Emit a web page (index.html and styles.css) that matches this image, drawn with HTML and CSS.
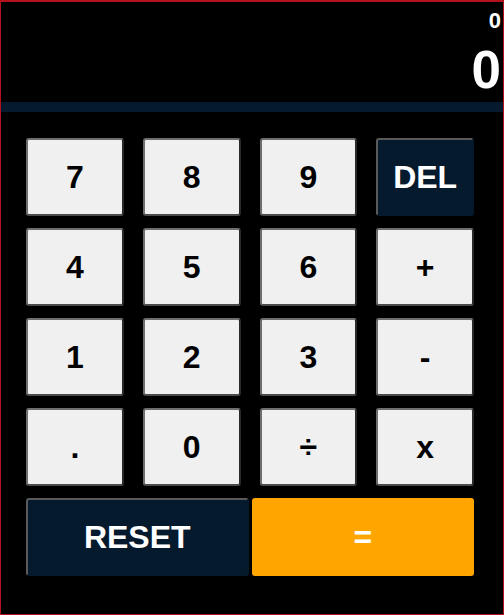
FILE: index.html
```html
<!DOCTYPE html>
<html>
<head>
<meta charset="utf-8">
<link rel="stylesheet" href="styles.css">
</head>
<body>
<div class="calc">
  <div class="display">
    <div class="prev">0</div>
    <div class="current">0</div>
  </div>
  <div class="bar"></div>
  <div class="keys">
    <button class="key">7</button>
    <button class="key">8</button>
    <button class="key">9</button>
    <button class="key dark">DEL</button>
    <button class="key">4</button>
    <button class="key">5</button>
    <button class="key">6</button>
    <button class="key">+</button>
    <button class="key">1</button>
    <button class="key">2</button>
    <button class="key">3</button>
    <button class="key">-</button>
    <button class="key">.</button>
    <button class="key">0</button>
    <button class="key">÷</button>
    <button class="key">x</button>
  </div>
  <div class="bottom">
    <button class="key dark">RESET</button>
    <button class="key equals">=</button>
  </div>
</div>
</body>
</html>
```
FILE: styles.css
```css
* { box-sizing: border-box; }
html, body { margin: 0; padding: 0; background: #000; }
body {
  width: 504px;
  height: 615px;
  border: 1px solid #b3121d;
  border-top-width: 2px;
  font-family: "Liberation Sans", Arial, sans-serif;
  overflow: hidden;
}
.calc { display: flex; flex-direction: column; }
.display {
  padding: 7px 2px 5px 0;
  text-align: right;
  color: #fff;
  font-weight: bold;
}
.prev { font-size: 22px; line-height: 23px; }
.current { font-size: 53px; line-height: 54px; margin-top: 11px; }
.bar { height: 10px; background: #061a2d; }
.keys {
  display: grid;
  grid-template-columns: repeat(4, 1fr);
  column-gap: 19px;
  row-gap: 12px;
  padding: 26px 29px 0 25px;
}
.key {
  height: 78px;
  border: 2px solid;
  border-color: #6e6e6e #2a2a2a #4a4a4a #6e6e6e;
  border-radius: 3px;
  background: #f0f0f0;
  color: #000;
  font-family: "Liberation Sans", Arial, sans-serif;
  font-weight: bold;
  font-size: 32px;
  padding: 0;
}
.key.dark { background: #061a2d; color: #fff; border-color: #5a5a5a #061a2d #061a2d #5a5a5a; }
.key.equals { background: #ffa500; color: #fff; border-color: #ffa500; }
.bottom {
  display: grid;
  grid-template-columns: 1fr 1fr;
  column-gap: 3px;
  padding: 12px 29px 0 25px;
}
```
